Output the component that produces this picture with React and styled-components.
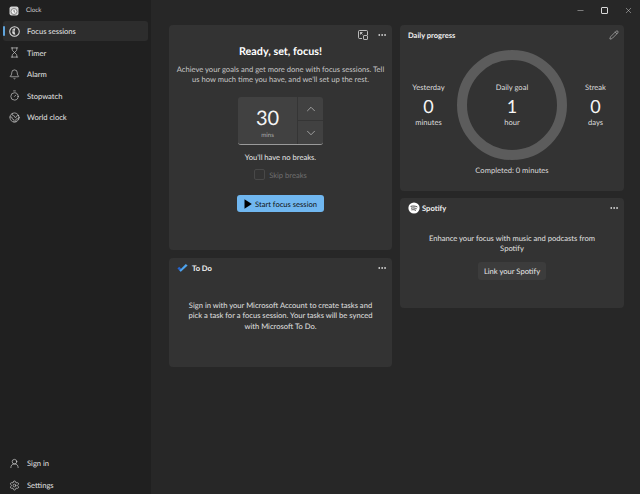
import React from "react"
import styled, { createGlobalStyle } from "styled-components"
import {
  Hourglass,
  Bell,
  Timer,
  Earth,
  UserRound,
  Settings,
  Pencil,
  Ellipsis,
  ChevronUp,
  ChevronDown,
  Minus,
  X,
} from "lucide-react"

const navItems = [
  { label: "Timer", icon: Hourglass },
  { label: "Alarm", icon: Bell },
  { label: "Stopwatch", icon: Timer },
  { label: "World clock", icon: Earth },
]

const GlobalStyle = createGlobalStyle`
  html, body {
    margin: 0;
    background: #272727;
  }
  * {
    box-sizing: border-box;
  }
`

const App = () => {
  return (
    <Page>
      <GlobalStyle />
      <Sidebar>
        <AppTitle>
          <ClockLogo>
            <svg width="10" height="10" viewBox="0 0 10 10">
              <rect x="0.5" y="0.5" width="9" height="9" rx="2" fill="#d4d4d4" />
              <circle cx="5" cy="5.5" r="3" fill="#f4f4f4" stroke="#6d6d6d" strokeWidth="0.8" />
              <path d="M5 3.8V5.7L6.2 6.4" stroke="#444" strokeWidth="0.7" fill="none" />
            </svg>
          </ClockLogo>
          Clock
        </AppTitle>
        <NavList>
          <NavItem $active>
            <ActiveMark />
            <FocusIcon />
            Focus sessions
          </NavItem>
          {navItems.map(({ label, icon: Icon }) => (
            <NavItem key={label}>
              <Icon size={11} strokeWidth={1.3} />
              {label}
            </NavItem>
          ))}
        </NavList>
        <NavFooter>
          <NavItem>
            <UserRound size={11} strokeWidth={1.3} />
            Sign in
          </NavItem>
          <NavItem>
            <Settings size={11} strokeWidth={1.3} />
            Settings
          </NavItem>
        </NavFooter>
      </Sidebar>
      <Main>
        <TitleBar>
          <WindowButton>
            <Minus size={9} strokeWidth={1.3} />
          </WindowButton>
          <WindowButton>
            <MaxSquare />
          </WindowButton>
          <WindowButton>
            <X size={9} strokeWidth={1.3} />
          </WindowButton>
        </TitleBar>
        <Columns>
          <Column>
            <FocusCard>
              <CardActions>
                <MiniModeIcon />
                <Ellipsis size={10} />
              </CardActions>
              <Heading>Ready, set, focus!</Heading>
              <Intro>
                Achieve your goals and get more done with focus sessions. Tell
                us how much time you have, and we'll set up the rest.
              </Intro>
              <Stepper>
                <StepperValue>
                  <Minutes>30</Minutes>
                  <MinutesLabel>mins</MinutesLabel>
                </StepperValue>
                <StepperButtons>
                  <StepperButton>
                    <ChevronUp size={14} strokeWidth={1} />
                  </StepperButton>
                  <StepperButton>
                    <ChevronDown size={14} strokeWidth={1} />
                  </StepperButton>
                </StepperButtons>
              </Stepper>
              <BreakNote>You'll have no breaks.</BreakNote>
              <SkipRow>
                <SkipBox />
                Skip breaks
              </SkipRow>
              <StartButton>
                <svg width="8" height="10" viewBox="0 0 8 10">
                  <path d="M0.5 0.3L7.8 5L0.5 9.7Z" fill="#000" />
                </svg>
                Start focus session
              </StartButton>
            </FocusCard>
            <TodoCard>
              <CardHeader>
                <CardTitle>
                  <svg width="11" height="10" viewBox="0 0 12 10">
                    <path d="M0.5 5.5L2.4 3.6L4.6 5.8L4.2 9.2Z" fill="#2564cf" />
                    <path d="M4.2 9.2L2.6 7.6L9.6 0.6L11.6 2.4Z" fill="#4ea4ee" />
                  </svg>
                  To Do
                </CardTitle>
                <Ellipsis size={10} color="#eee" />
              </CardHeader>
              <CardText $top={22} $width={190}>
                Sign in with your Microsoft Account to create tasks and pick a
                task for a focus session. Your tasks will be synced with
                Microsoft To Do.
              </CardText>
            </TodoCard>
          </Column>
          <Column $gap={7}>
            <ProgressCard>
              <CardHeader>
                <ProgressTitle>Daily progress</ProgressTitle>
                <Pencil size={10} strokeWidth={1.2} color="#e4e4e4" />
              </CardHeader>
              <ProgressRow>
                <Stat>
                  <StatLabel>Yesterday</StatLabel>
                  <StatNumber>0</StatNumber>
                  <StatLabel>minutes</StatLabel>
                </Stat>
                <Ring>
                  <StatLabel>Daily goal</StatLabel>
                  <StatNumber>1</StatNumber>
                  <StatLabel>hour</StatLabel>
                </Ring>
                <Stat>
                  <StatLabel>Streak</StatLabel>
                  <StatNumber>0</StatNumber>
                  <StatLabel>days</StatLabel>
                </Stat>
              </ProgressRow>
              <Completed>Completed: 0 minutes</Completed>
            </ProgressCard>
            <SpotifyCard>
              <CardHeader>
                <CardTitle $gap={2}>
                  <svg width="12" height="12" viewBox="0 0 12 12">
                    <circle cx="6" cy="6" r="5.6" fill="#fff" />
                    <path
                      d="M2.6 4.4C4.6 3.8 7.4 3.9 9.4 5M3 6.2C4.8 5.7 7 5.9 8.7 6.8M3.4 7.9C4.9 7.5 6.6 7.6 8 8.4"
                      stroke="#333"
                      strokeWidth="0.9"
                      fill="none"
                    />
                  </svg>
                  Spotify
                </CardTitle>
                <Ellipsis size={10} color="#eee" />
              </CardHeader>
              <CardText $top={15} $width={180}>
                Enhance your focus with music and podcasts from Spotify
              </CardText>
              <LinkButton>Link your Spotify</LinkButton>
            </SpotifyCard>
          </Column>
        </Columns>
      </Main>
    </Page>
  )
}

const FocusIcon = () => (
  <svg width="11" height="11" viewBox="0 0 12 12">
    <circle cx="6" cy="6" r="5.2" fill="none" stroke="#ddd" strokeWidth="1.1" />
    <path d="M7 2.4A3.6 3.6 0 1 0 7 9.6L6 6Z" fill="#d6d6d6" />
    <path d="M3.4 4.4L5 3.8L4.8 6.6L3.6 6.2Z" fill="#777" />
  </svg>
)

const MiniModeIcon = () => (
  <svg width="10" height="10" viewBox="0 0 10 10" fill="none" stroke="#ddd" strokeWidth="0.8">
    <path d="M4 8.5H1.5A1 1 0 0 1 .5 7.5V1.5A1 1 0 0 1 1.5.5H8.5A1 1 0 0 1 9.5 1.5V5" />
    <rect x="5.5" y="5.5" width="4" height="4" rx=".6" />
    <path d="M2.5 2.5L4.5 4.5M2.5 4.5V2.5H4.5" />
  </svg>
)

const Page = styled.div`
  display: flex;
  width: 640px;
  height: 494px;
  overflow: hidden;
  background: #272727;
  color: #e8e8e8;
  font-family: Lato, Roboto, sans-serif;
  font-size: 7.6px;
  text-rendering: geometricPrecision;
`

const Sidebar = styled.aside`
  display: flex;
  flex-direction: column;
  flex: 0 0 151px;
  padding: 0 3px;
  background: #202020;
`

const AppTitle = styled.div`
  display: flex;
  align-items: center;
  gap: 7px;
  height: 21px;
  padding-left: 6px;
  font-size: 6.3px;
  color: #d0d0d0;
`

const ClockLogo = styled.span`
  display: flex;
`

const NavList = styled.nav`
  display: flex;
  flex-direction: column;
  gap: 1.5px;
`

const NavFooter = styled(NavList)`
  margin-top: auto;
  margin-bottom: -1px;
  gap: 2px;
`

const NavItem = styled.div`
  position: relative;
  display: flex;
  align-items: center;
  gap: 7px;
  height: 20px;
  padding-left: 6px;
  border-radius: 3px;
  color: #e4e4e4;
  background: ${(p) => (p.$active ? "#2d2d2d" : "transparent")};

  svg {
    flex: none;
  }
`

const ActiveMark = styled.span`
  position: absolute;
  left: 0;
  top: 5px;
  width: 2px;
  height: 10px;
  border-radius: 1px;
  background: #60a5dc;
`

const Main = styled.main`
  display: flex;
  flex-direction: column;
  flex: 1;
`

const TitleBar = styled.div`
  display: flex;
  justify-content: flex-end;
  align-items: center;
  height: 25px;
  padding-bottom: 5px;
`

const WindowButton = styled.span`
  display: flex;
  justify-content: center;
  width: 24px;
  color: #d8d8d8;
`

const MaxSquare = styled.span`
  display: block;
  width: 7px;
  height: 7px;
  border: 1.3px solid #d8d8d8;
  border-radius: 1px;
`

const Columns = styled.div`
  display: grid;
  grid-template-columns: 223px 224px;
  gap: 8px;
  padding-left: 18px;
`

const Column = styled.div`
  display: flex;
  flex-direction: column;
  gap: ${(p) => p.$gap ?? 8}px;
`

const Card = styled.section`
  position: relative;
  display: flex;
  flex-direction: column;
  border-radius: 4px;
  background: #333333;
`

const FocusCard = styled(Card)`
  align-items: center;
  height: 225px;
`

const TodoCard = styled(Card)`
  height: 109px;
`

const ProgressCard = styled(Card)`
  height: 166px;
`

const SpotifyCard = styled(Card)`
  align-items: center;
  height: 110px;
`

const CardActions = styled.div`
  position: absolute;
  top: 5px;
  right: 5px;
  display: flex;
  align-items: center;
  gap: 9px;
  color: #e8e8e8;
`

const CardHeader = styled.header`
  display: flex;
  justify-content: space-between;
  align-items: center;
  align-self: stretch;
  height: 20px;
  padding: 0 5px 0 8px;
`

const CardTitle = styled.div`
  display: flex;
  align-items: center;
  gap: ${(p) => p.$gap ?? 4}px;
  font-size: 7.6px;
  font-weight: 700;
  color: #f0f0f0;
`

const ProgressTitle = styled(CardTitle)`
  font-size: 7.5px;
`

const Heading = styled.h2`
  margin: 19px 0 0;
  font-size: 10.8px;
  line-height: 16px;
  font-weight: 700;
  color: #fff;
`

const Intro = styled.p`
  width: 214px;
  margin: 4px 0 0;
  line-height: 10px;
  text-align: center;
  color: #c6c6c6;
`

const Stepper = styled.div`
  display: flex;
  width: 85px;
  height: 48px;
  margin-top: 13px;
  border-radius: 3px;
  border-bottom: 1.5px solid #9a9a9a;
  background: #414141;
  overflow: hidden;
`

const StepperValue = styled.div`
  display: flex;
  flex-direction: column;
  align-items: center;
  flex: 1;
  border-right: 1px solid #353535;
`

const Minutes = styled.span`
  margin-top: 8px;
  font-size: 20px;
  line-height: 26px;
  color: #f4f4f4;
`

const MinutesLabel = styled.span`
  font-size: 6.2px;
  line-height: 9px;
  color: #aaa;
`

const StepperButtons = styled.div`
  display: flex;
  flex-direction: column;
  width: 25px;
`

const StepperButton = styled.span`
  display: flex;
  justify-content: center;
  align-items: center;
  flex: 1;
  color: #e0e0e0;

  &:first-child {
    border-bottom: 1px solid #353535;
  }
`

const BreakNote = styled.p`
  margin: 7px 0 0;
  line-height: 11px;
  color: #e6e6e6;
`

const SkipRow = styled.div`
  display: flex;
  align-items: center;
  gap: 4px;
  height: 11px;
  margin-top: 6px;
  color: #6f6f6f;
`

const SkipBox = styled.span`
  width: 11px;
  height: 11px;
  border: 1px solid #484848;
  border-radius: 2px;
`

const StartButton = styled.div`
  display: flex;
  justify-content: center;
  align-items: center;
  gap: 3px;
  width: 87px;
  height: 17px;
  margin-top: 15px;
  border-radius: 3px;
  white-space: nowrap;
  color: #111;
  background: #70b7f0;
`

const CardText = styled.p`
  width: ${(p) => p.$width}px;
  margin: ${(p) => p.$top}px auto 0;
  line-height: 10.3px;
  text-align: center;
  color: #e0e0e0;
`

const ProgressRow = styled.div`
  display: flex;
  justify-content: space-between;
  align-items: center;
  padding-top: 5px;
`

const Stat = styled.div`
  display: flex;
  flex-direction: column;
  align-items: center;
  flex: 1;
`

const Ring = styled.div`
  display: flex;
  flex: none;
  flex-direction: column;
  justify-content: center;
  align-items: center;
  width: 110px;
  height: 110px;
  border: 10px solid #5c5c5c;
  border-radius: 50%;
`

const StatLabel = styled.span`
  line-height: 11px;
  color: #dcdcdc;
`

const StatNumber = styled.span`
  margin: 3px 0 1px;
  font-size: 18px;
  line-height: 20px;
  color: #f6f6f6;
`

const Completed = styled.div`
  margin-top: 5px;
  text-align: center;
  line-height: 11px;
  color: #dcdcdc;
`

const LinkButton = styled.div`
  display: flex;
  justify-content: center;
  align-items: center;
  width: 68px;
  height: 18px;
  margin-top: 8px;
  border-radius: 3px;
  color: #e8e8e8;
  background: #3c3c3c;
`

export default App
